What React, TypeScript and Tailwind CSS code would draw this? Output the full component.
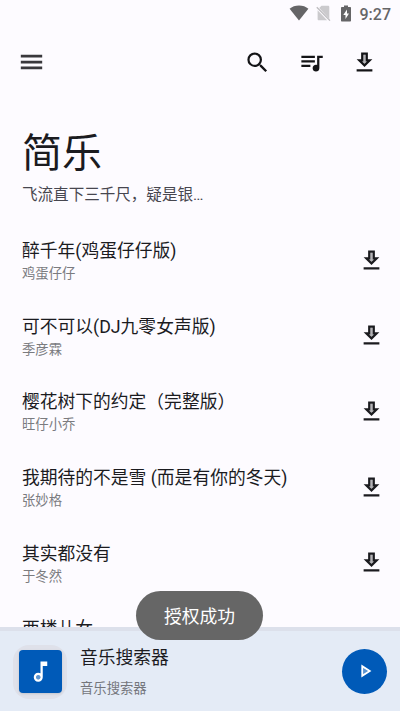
interface Song {
    title: string;
    artist: string;
}

const songs: Song[] = [
    { title: "醉千年(鸡蛋仔仔版)", artist: "鸡蛋仔仔" },
    { title: "可不可以(DJ九零女声版)", artist: "季彦霖" },
    { title: "樱花树下的约定（完整版）", artist: "旺仔小乔" },
    { title: "我期待的不是雪 (而是有你的冬天)", artist: "张妙格" },
    { title: "其实都没有", artist: "于冬然" },
    { title: "西楼儿女", artist: "" },
];

const icons = {
    menu: "M2.5 18h19v-2.4h-19V18zm0-5.2h19v-2.4h-19v2.4zM2.5 5.2v2.4h19V5.2h-19z",
    search: "M15.5 14h-.79l-.28-.27A6.471 6.471 0 0 0 16 9.5 6.5 6.5 0 1 0 9.5 16c1.61 0 3.09-.59 4.23-1.57l.27.28v.79l5 4.99L20.49 19l-4.99-5zm-6 0C7.01 14 5 11.99 5 9.5S7.01 5 9.5 5 14 7.01 14 9.5 11.99 14 9.5 14z",
    queue: "M15 6H3v2h12V6zm0 4H3v2h12v-2zM3 16h8v-2H3v2zM17 6v8.18c-.31-.11-.65-.18-1-.18-1.66 0-3 1.34-3 3s1.34 3 3 3 3-1.34 3-3V8h3V6h-5z",
    download:
        "M19 9h-4V3H9v6H5l7 7 7-7zm-8 2V5h2v6h1.17L12 13.17 9.83 11H11zm-6 7h14v2H5z",
    note: "M12 3v10.55c-.59-.34-1.27-.55-2-.55-2.21 0-4 1.79-4 4s1.79 4 4 4 4-1.79 4-4V7h4V3h-6zm-2 16c-1.1 0-2-.9-2-2s.9-2 2-2 2 .9 2 2-.9 2-2 2z",
    play: "M8 5v14l11-7L8 5zm2 3.64L15.27 12 10 15.36V8.64z",
};

// light fill shown inside the outlined shapes
const innerShapes = {
    download: "M11 5h2v6h1.17L12 13.17 9.83 11H11z",
    note: "M10 19c-1.1 0-2-.9-2-2s.9-2 2-2 2 .9 2 2-.9 2-2 2z",
    play: "M10 8.64 15.27 12 10 15.36z",
};

interface IconProps {
    path: string;
    className: string;
    inner?: string;
    innerFill?: string;
}

function Icon({ path, className, inner, innerFill }: IconProps) {
    return (
        <svg
            viewBox="0 0 24 24"
            fill="currentColor"
            className={"shrink-0 " + className}
        >
            {inner && <path d={inner} fill={innerFill} />}
            <path d={path} />
        </svg>
    );
}

function DownloadIcon() {
    return (
        <Icon
            path={icons.download}
            inner={innerShapes.download}
            innerFill="#b4b3b7"
            className="size-[27px]"
        />
    );
}

function StatusBar() {
    return (
        <div className="flex h-[26px] shrink-0 items-center justify-end pr-[9px] text-[#656567]">
            <svg viewBox="0 0 20 16" fill="currentColor" className="h-4 w-5">
                <path d="M10 15.6.6 3.8C3 1.7 6.3.5 10 .5s7 1.2 9.4 3.3L10 15.6z" />
            </svg>
            <svg viewBox="0 0 15 16" className="ml-[7px] h-4 w-[15px]">
                <path
                    d="M5.5.8H12c.8 0 1.3.5 1.3 1.3v11.8L3.2 3.1 5.5.8zM1.6 5.2v8.7c0 .8.5 1.3 1.3 1.3h8.2L1.6 5.2z"
                    fill="#cbcacd"
                />
                <path d="M.8 2.3 14 15.6" stroke="#bdbcbf" strokeWidth="1.3" />
            </svg>
            <svg
                viewBox="0 0 12 17"
                fill="currentColor"
                className="ml-[9px] h-[17px] w-3"
            >
                <path d="M4 .5h4V2h2c.6 0 1 .4 1 1v12.5c0 .6-.4 1-1 1H2c-.6 0-1-.4-1-1V3c0-.6.4-1 1-1h2V.5z" />
                <path d="M7 4.5 3.3 10h2.2v4L9 8.5H7v-4z" fill="#fff" />
            </svg>
            <span className="mt-[3px] ml-2 font-[Roboto,sans-serif] text-[16px] font-medium">
                9:27
            </span>
        </div>
    );
}

function SongRow({ title, artist }: Song) {
    return (
        <li className="flex h-[75.6px] shrink-0 items-center justify-between pr-[15.5px] pl-[22px]">
            <div className="pt-[2px]">
                <h2 className="h-[25px] text-[17.78px] leading-[25px] text-[#1b1b1f]">
                    {title}
                </h2>
                <p className="h-5 text-[13.33px] leading-5 text-[#7b7b7f]">
                    {artist}
                </p>
            </div>
            <div className="pb-px">
                <DownloadIcon />
            </div>
        </li>
    );
}

function Player() {
    return (
        <footer className="flex h-[84px] shrink-0 items-center border-t-4 border-[#dce0eb] bg-[#e4ebf6] px-[13px]">
            <div className="mt-px flex size-[54px] items-center justify-center rounded-2xl bg-[#dfe1ea]">
                <div className="flex size-[43px] items-center justify-center rounded-[4px] bg-[#005ab8] text-white shadow">
                    <Icon
                        path={icons.note}
                        inner={innerShapes.note}
                        innerFill="#5c95d2"
                        className="size-[27px]"
                    />
                </div>
            </div>
            <div className="ml-[13px] flex-1 pt-[2px]">
                <p className="text-[17.78px] leading-[26px] text-[#1b1b1f]">
                    音乐搜索器
                </p>
                <p className="mt-2 text-[13.33px] leading-5 text-[#74767c]">
                    音乐搜索器
                </p>
            </div>
            <button className="flex size-[45px] items-center justify-center rounded-full bg-[#005ab8] text-white">
                <Icon
                    path={icons.play}
                    inner={innerShapes.play}
                    innerFill="#5c95d2"
                    className="size-[22px]"
                />
            </button>
        </footer>
    );
}

export default function App() {
    return (
        <div className="relative flex h-[711px] w-[400px] flex-col overflow-hidden bg-[#fdfbff] font-[Roboto,'Noto_Sans_CJK_SC',sans-serif] text-[#1b1b1f]">
            <StatusBar />

            <header className="flex h-[72px] shrink-0 items-center pr-[22px] pl-[18px]">
                <Icon path={icons.menu} className="size-[27px] text-[#39383c]" />
                <div className="ml-auto flex gap-[26.5px] text-[#141417]">
                    <Icon path={icons.search} className="size-[27px]" />
                    <Icon path={icons.queue} className="size-[27px]" />
                    <DownloadIcon />
                </div>
            </header>

            <main className="flex min-h-0 flex-1 flex-col overflow-hidden">
                <div className="h-[125px] shrink-0 px-[22px] pt-[30px]">
                    <h1 className="text-[40px] leading-[52px]">简乐</h1>
                    <p className="mt-1 text-[15.56px] leading-[22px] text-[#47464f]">
                        飞流直下三千尺，疑是银…
                    </p>
                </div>
                <ul className="flex flex-col">
                    {songs.map((song) => (
                        <SongRow key={song.title} {...song} />
                    ))}
                </ul>
            </main>

            <Player />

            <div className="absolute top-[591px] left-[136px] flex h-[49px] w-[127px] items-center justify-center rounded-full bg-[#666666] pt-[3px] text-[17.78px] text-white">
                授权成功
            </div>
        </div>
    );
}
